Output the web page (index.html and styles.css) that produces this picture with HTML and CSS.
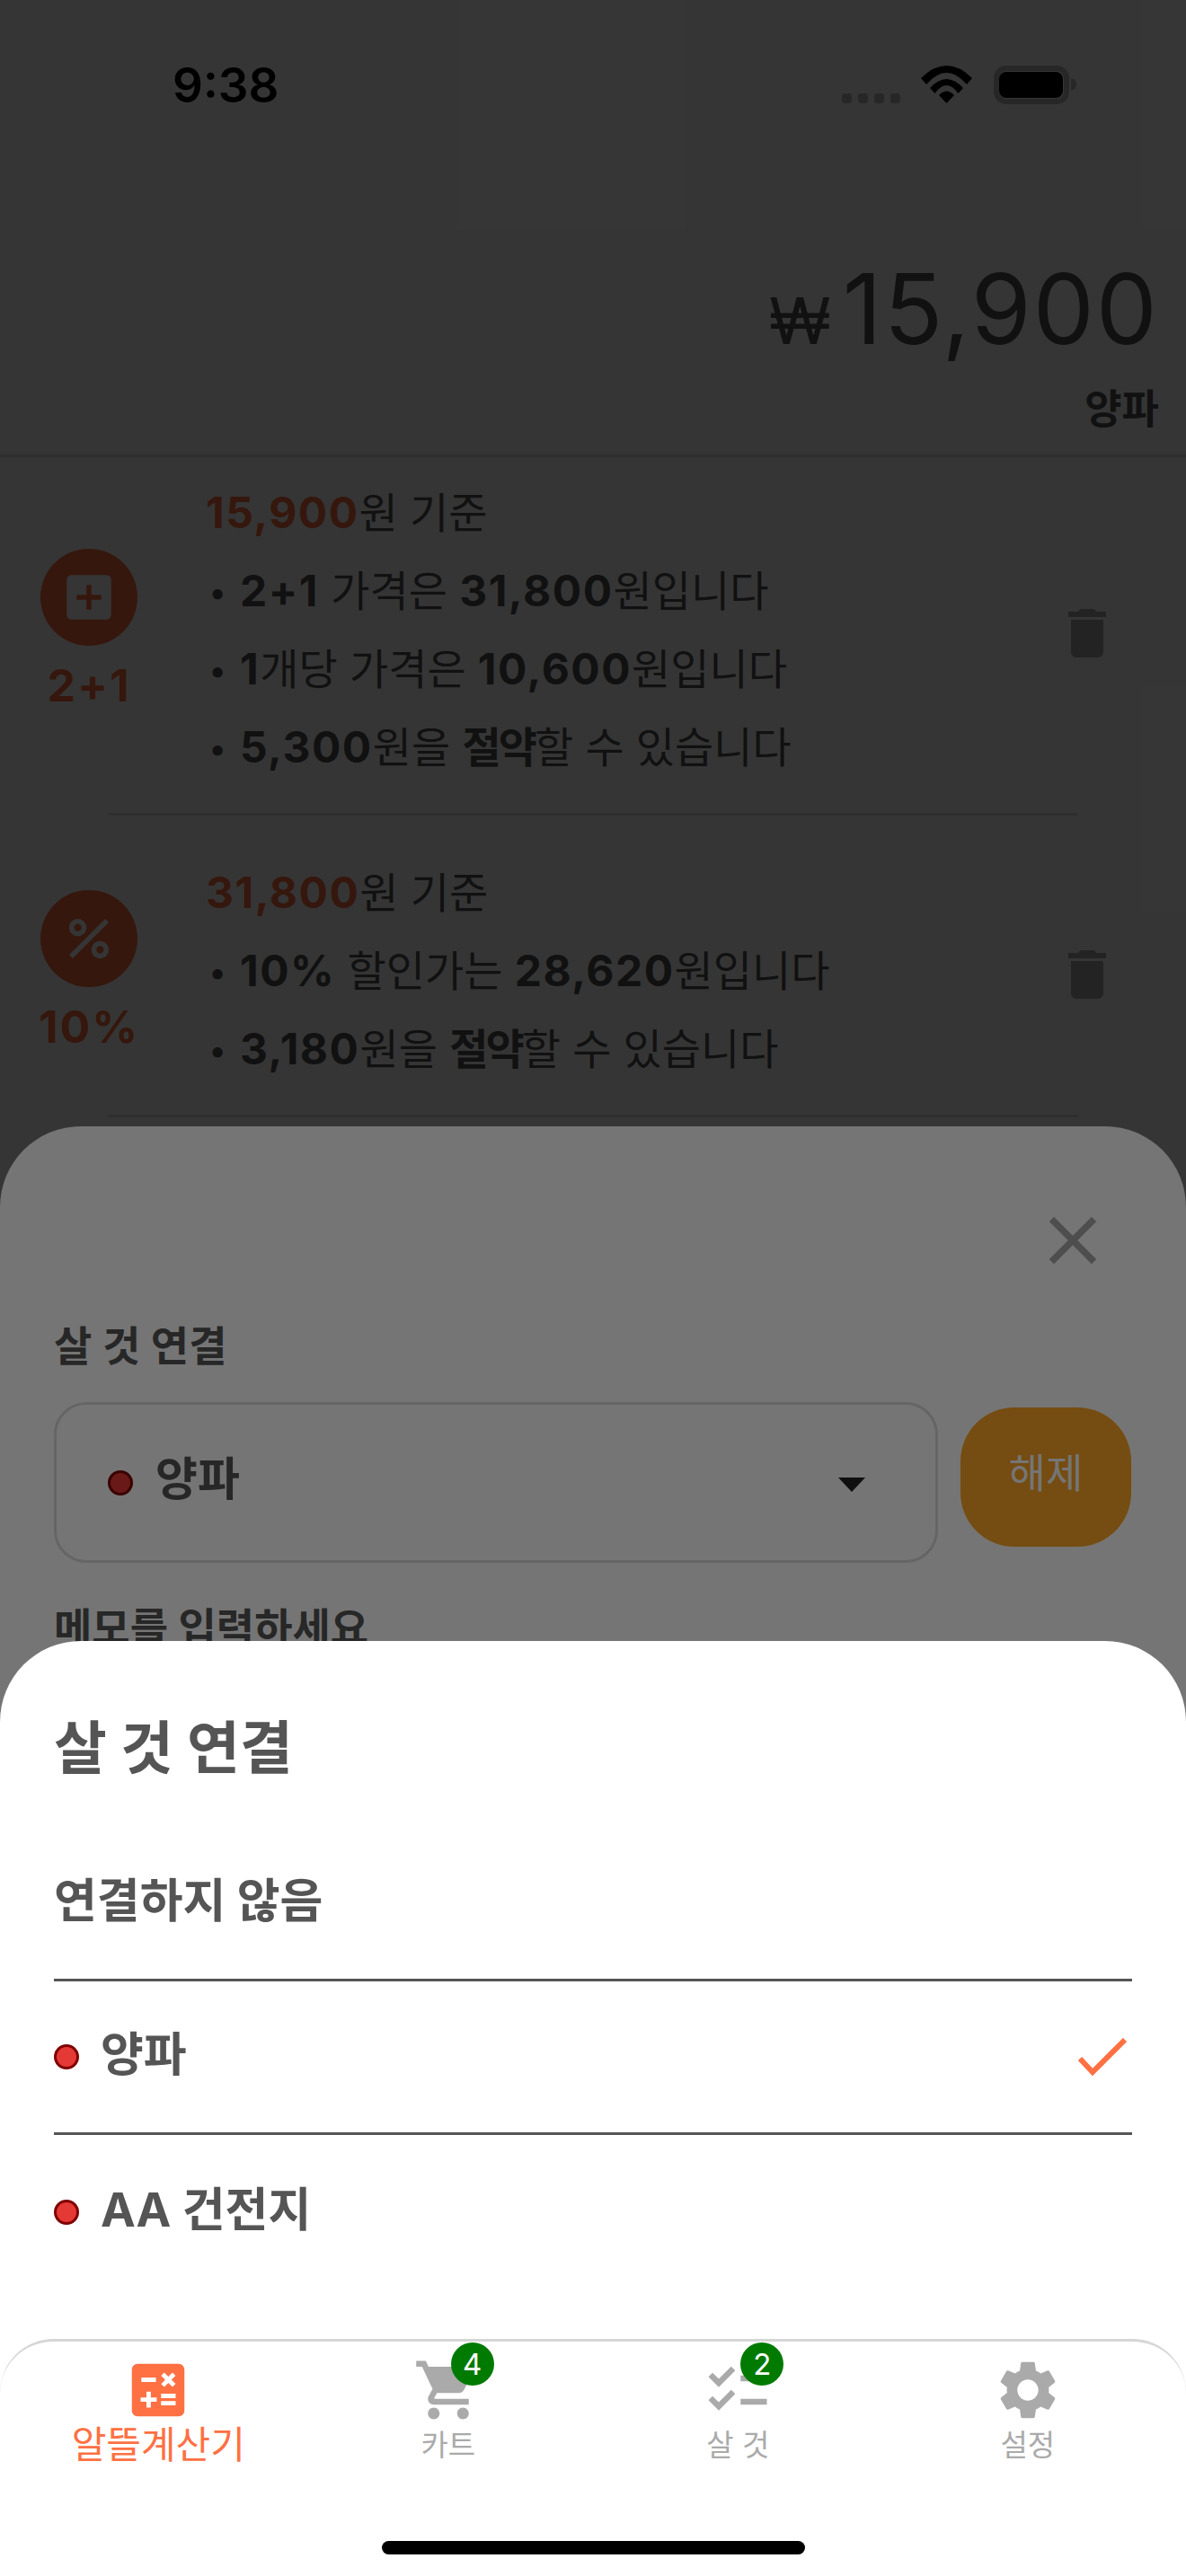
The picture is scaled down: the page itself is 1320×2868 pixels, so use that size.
FILE: index.html
```html
<!DOCTYPE html>
<html lang="ko">
<head>
    <meta charset="UTF-8">
    <meta name="viewport" content="width=device-width, initial-scale=1.0">
    <title>알뜰계산기</title>
    <link rel="stylesheet" href="styles.css">
</head>
<body>
<div class="screen">

    <div class="status-bar">
        <span class="time">9:38</span>
        <svg class="status-icons" width="261" height="43" viewBox="0 0 261 43">
            <rect x="0" y="31" width="11" height="11" rx="3" fill="#bbb"/>
            <rect x="18" y="31" width="11" height="11" rx="3" fill="#bbb"/>
            <rect x="36" y="31" width="11" height="11" rx="3" fill="#bbb"/>
            <rect x="54" y="31" width="11" height="11" rx="3" fill="#bbb"/>
            <path d="M88 14Q116.500 -14 145 14L139 21Q116.500 -5 94 21Z"/>
            <path d="M98 25Q116.500 5 135 25L129.500 31Q116.500 13 103.500 31Z"/>
            <path d="M108 33Q116.500 24 125 33L116.500 42Z"/>
            <rect x="172" y="3" width="78" height="37" rx="11" fill="none" stroke="#bbb" stroke-width="6"/>
            <rect x="175" y="7" width="71" height="29" rx="8"/>
            <path d="M255 14c4 1 6 4 6 7s-2 6-6 7z" fill="#bbb"/>
        </svg>
    </div>

    <header class="price-header">
        <div class="price"><span class="won">₩</span>15,900</div>
        <div class="price-name">양파</div>
    </header>

    <div class="deal-list">
        <div class="deal deal-first">
            <div class="deal-badge">
                <div class="deal-circle">
                    <svg width="66" height="66" viewBox="0 0 24 24" fill="#fff"><path d="M19 3H5c-1.110 0-2 .9-2 2v14c0 1.100.89 2 2 2h14c1.100 0 2-.9 2-2V5c0-1.100-.9-2-2-2zm-2 10h-4v4h-2v-4H7v-2h4V7h2v4h4v2z"/></svg>
                </div>
                <div class="deal-label">2+1</div>
            </div>
            <div class="deal-text">
                <div class="deal-line"><b class="accent">15,900</b>원 기준</div>
                <div class="deal-line"><span class="bullet">•</span><b>2+1</b> 가격은 <b>31,800</b>원입니다</div>
                <div class="deal-line"><span class="bullet">•</span><b>1</b>개당 가격은 <b>10,600</b>원입니다</div>
                <div class="deal-line"><span class="bullet">•</span><b>5,300</b>원을 <b class="word">절약</b>할 수 있습니다</div>
            </div>
            <svg class="trash" width="72" height="72" viewBox="0 0 24 24"><path d="M6 19c0 1.100.9 2 2 2h8c1.100 0 2-.9 2-2V7H6v12zM19 4h-3.500l-1-1h-5l-1 1H5v2h14V4z"/></svg>
        </div>
        <div class="deal">
            <div class="deal-badge">
                <div class="deal-circle">
                    <svg width="66" height="66" viewBox="0 0 24 24" fill="#fff"><path d="M7.500 11C9.430 11 11 9.430 11 7.500S9.430 4 7.500 4 4 5.570 4 7.500 5.570 11 7.500 11zm0-5C8.330 6 9 6.670 9 7.500S8.330 9 7.500 9 6 8.330 6 7.500 6.670 6 7.500 6zM4.003 18.589L18.589 4.003l1.414 1.414L5.418 20.003zM16.500 13c-1.930 0-3.500 1.570-3.500 3.500s1.570 3.500 3.500 3.500 3.500-1.570 3.500-3.500-1.570-3.500-3.500-3.500zm0 5c-.83 0-1.500-.67-1.500-1.500s.67-1.500 1.500-1.500 1.500.67 1.500 1.500-.67 1.500-1.500 1.500z"/></svg>
                </div>
                <div class="deal-label">10%</div>
            </div>
            <div class="deal-text">
                <div class="deal-line"><b class="accent">31,800</b>원 기준</div>
                <div class="deal-line"><span class="bullet">•</span><b>10%</b> 할인가는 <b>28,620</b>원입니다</div>
                <div class="deal-line"><span class="bullet">•</span><b>3,180</b>원을 <b class="word">절약</b>할 수 있습니다</div>
            </div>
            <svg class="trash" width="72" height="72" viewBox="0 0 24 24"><path d="M6 19c0 1.100.9 2 2 2h8c1.100 0 2-.9 2-2V7H6v12zM19 4h-3.500l-1-1h-5l-1 1H5v2h14V4z"/></svg>
        </div>
    </div>

    <div class="scrim"></div>

    <div class="sheet memo-sheet">
        <div class="sheet-close">
            <svg width="90" height="90" viewBox="0 0 24 24" fill="#aaa"><path d="M19 6.410L17.590 5 12 10.590 6.410 5 5 6.410 10.590 12 5 17.590 6.410 19 12 13.410 17.590 19 19 17.590 13.410 12z"/></svg>
        </div>
        <div class="field-label">살 것 연결</div>
        <div class="link-row">
            <div class="link-select">
                <span class="dot"></span>
                <span class="link-name">양파</span>
                <svg class="link-arrow" width="30" height="16" viewBox="0 0 30 16"><path d="M0 0H30L15 16Z"/></svg>
            </div>
            <div class="unlink-btn">해제</div>
        </div>
        <div class="field-label memo-label">메모를 입력하세요</div>
    </div>

    <div class="scrim"></div>

    <div class="sheet picker-sheet">
        <div class="picker">
            <div class="picker-title">살 것 연결</div>
            <div class="option">연결하지 않음</div>
            <div class="option">
                <span class="dot"></span>
                <span>양파</span>
                <svg class="option-check" width="54" height="42" viewBox="0 0 54 42"><path d="M2 23L16 38L52 2" fill="none" stroke="#ff7043" stroke-width="6"/></svg>
            </div>
            <div class="option option-last">
                <span class="dot"></span>
                <span>AA 건전지</span>
            </div>
        </div>

        <nav class="tabbar">
            <div class="tab tab-active">
                <div class="tab-icon">
                    <svg width="78" height="78" viewBox="0 0 24 24"><path d="M19 3H5c-1.100 0-2 .9-2 2v14c0 1.100.9 2 2 2h14c1.100 0 2-.9 2-2V5c0-1.100-.9-2-2-2zm-5.970 4.060L14.090 6l1.410 1.410L16.910 6l1.060 1.060-1.410 1.410 1.410 1.410-1.060 1.060-1.410-1.400-1.410 1.410-1.060-1.060 1.410-1.410-1.410-1.420zm-6.780.66h5v1.500h-5v-1.500zM11.500 16h-2v2H8v-2H6v-1.500h2v-2h1.500v2h2V16zm6.500 1.250h-5v-1.500h5v1.500zm0-2.500h-5v-1.500h5v1.500z"/></svg>
                </div>
                <span>알뜰계산기</span>
            </div>
            <div class="tab">
                <div class="tab-icon">
                    <svg width="78" height="78" viewBox="0 0 24 24"><path d="M7 18c-1.100 0-1.990.9-1.990 2S5.900 22 7 22s2-.9 2-2-.9-2-2-2zM1 2v2h2l3.600 7.590-1.350 2.450c-.16.28-.25.61-.25.96 0 1.100.9 2 2 2h12v-2H7.420c-.14 0-.25-.11-.25-.25l.03-.12.9-1.630h7.450c.75 0 1.410-.41 1.750-1.030l3.580-6.470c.08-.14.12-.31.12-.48 0-.55-.45-1-1-1H5.210l-.94-2H1zm16 16c-1.100 0-1.990.9-1.990 2s.89 2 1.990 2 2-.9 2-2-.9-2-2-2z"/></svg>
                    <span class="tab-count">4</span>
                </div>
                <span>카트</span>
            </div>
            <div class="tab">
                <div class="tab-icon">
                    <svg width="78" height="78" viewBox="0 0 24 24"><path d="M22 7h-9v2h9V7zM22 15h-9v2h9v-2zM5.540 11L2 7.460l1.410-1.410 2.120 2.120 4.240-4.240 1.410 1.410L5.540 11zM5.540 19L2 15.460l1.410-1.410 2.120 2.120 4.240-4.240 1.410 1.410L5.540 19z"/></svg>
                    <span class="tab-count">2</span>
                </div>
                <span>살 것</span>
            </div>
            <div class="tab">
                <div class="tab-icon">
                    <svg width="78" height="78" viewBox="0 0 24 24"><path d="M19.140 12.940c.04-.3.06-.61.06-.94 0-.32-.02-.64-.07-.94l2.030-1.580c.18-.14.23-.41.12-.61l-1.920-3.320c-.12-.22-.37-.29-.59-.22l-2.390.96c-.5-.38-1.030-.7-1.620-.94l-.36-2.540c-.04-.24-.24-.41-.48-.41h-3.840c-.24 0-.43.17-.47.41l-.36 2.540c-.59.24-1.130.57-1.620.94l-2.390-.96c-.22-.08-.47 0-.59.22L2.740 8.870c-.12.21-.08.47.12.61l2.030 1.580c-.05.3-.09.63-.09.94s.02.64.07.94l-2.030 1.580c-.18.14-.23.41-.12.61l1.920 3.320c.12.22.37.29.59.22l2.390-.96c.5.38 1.030.7 1.620.94l.36 2.540c.05.24.24.41.48.41h3.840c.24 0 .44-.17.47-.41l.36-2.540c.59-.24 1.130-.56 1.620-.94l2.390.96c.22.08.47 0 .59-.22l1.920-3.320c.12-.22.07-.47-.12-.61l-2.010-1.580zM12 15.600c-1.980 0-3.600-1.620-3.600-3.600s1.620-3.600 3.600-3.600 3.600 1.620 3.600 3.600-1.620 3.600-3.600 3.600z"/></svg>
                </div>
                <span>설정</span>
            </div>
        </nav>
        <div class="home-indicator"></div>
    </div>

</div>
</body>
</html>
```

FILE: styles.css
```css
* {
    box-sizing: border-box;
}
body {
    margin: 0;
    background-color: #fff;
    font-family: Inter, "Noto Sans CJK KR", sans-serif;
    color: #555;
}
.screen {
    position: relative;
    width: 1320px;
    height: 2868px;
    overflow: hidden;
    background-color: #fff;
}

/* status bar */
.status-bar {
    display: flex;
    justify-content: space-between;
    align-items: flex-start;
    height: 190px;
    padding: 66px 122px 0 192px;
}
.time {
    font-size: 53px;
    line-height: 58px;
    font-weight: 600;
    color: #000;
}
.status-icons {
    margin-top: 7px;
}

/* price */
.price-header {
    height: 319px;
    border-bottom: 3px solid #ddd;
    padding: 89px 30px 0 0;
    text-align: right;
}
.price {
    font-size: 108px;
    line-height: 130px;
    letter-spacing: 2px;
}
.won {
    font-size: 72px;
    margin-right: 11px;
}
.price-name {
    font-size: 45px;
    line-height: 60px;
    font-weight: 600;
    margin-top: 4px;
}

/* deals */
.deal {
    position: relative;
    display: flex;
    align-items: center;
    padding: 42px 0 25px 36px;
}
.deal-first {
    padding-top: 18px;
}
.deal::after {
    content: "";
    position: absolute;
    left: 120px;
    right: 120px;
    bottom: 0;
    border-bottom: 3px solid #ddd;
}
.deal-badge {
    width: 126px;
    display: flex;
    flex-direction: column;
    align-items: center;
    flex-shrink: 0;
}
.deal-circle {
    width: 108px;
    height: 108px;
    border-radius: 50%;
    background-color: #ff7043;
    display: flex;
    align-items: center;
    justify-content: center;
}
.deal-label {
    font-size: 50px;
    line-height: 72px;
    font-weight: 700;
    letter-spacing: 2px;
    white-space: nowrap;
    color: #ff7043;
    margin-top: 8px;
}
.deal-text {
    flex: 1;
    margin-left: 67px;
    padding-bottom: 8px;
}
.deal-line {
    font-size: 47px;
    line-height: 87px;
}
.deal-line b {
    font-size: 48px;
    font-weight: 700;
    letter-spacing: 1.5px;
}
.deal-line .word {
    font-size: 47px;
    letter-spacing: -3px;
}
.bullet {
    display: inline-block;
    width: 38px;
    padding-left: 3px;
    font-size: 36px;
    vertical-align: 3px;
    line-height: 1;
}
.accent {
    color: #ff7043;
}
.trash {
    fill: #aaa;
    margin-right: 74px;
}

/* sheets */
.scrim {
    position: absolute;
    inset: 0;
    background-color: rgba(0, 0, 0, 0.54);
}
.sheet {
    position: absolute;
    left: 0;
    right: 0;
    bottom: 0;
    background-color: #fff;
    border-radius: 90px 90px 0 0;
}
.memo-sheet {
    top: 1254px;
    padding: 82px 60px 0;
}
.sheet-close {
    display: flex;
    justify-content: flex-end;
    margin-right: 21px;
    height: 90px;
}
.field-label {
    font-size: 46px;
    line-height: 72px;
    font-weight: 600;
    margin-top: 36px;
}
.link-row {
    display: flex;
    align-items: flex-start;
    gap: 25px;
    margin-top: 27px;
}
.link-select {
    width: 984px;
    height: 179px;
    border: 3px solid #ddd;
    border-radius: 36px;
    display: flex;
    align-items: center;
    padding: 0 78px 0 57px;
}
.link-name {
    font-size: 51px;
    font-weight: 600;
    margin-left: 25px;
    margin-bottom: 16px;
}
.link-arrow {
    fill: #222;
    margin-left: auto;
    margin-top: 4px;
}
.unlink-btn {
    width: 190px;
    height: 155px;
    margin-top: 6px;
    border-radius: 60px;
    background-color: #ffa726;
    color: #fff;
    font-size: 45px;
    line-height: 148px;
    text-align: center;
}
.memo-label {
    margin-top: 36px;
}
.dot {
    width: 28px;
    height: 28px;
    border-radius: 50%;
    background-color: #e53935;
    border: 3px solid #7f0000;
    flex-shrink: 0;
}

/* picker */
.picker-sheet {
    top: 1827px;
}
.picker {
    padding: 74px 60px 0;
}
.picker-title {
    font-size: 64px;
    line-height: 90px;
    font-weight: 700;
    margin-bottom: 44px;
}
.option {
    display: flex;
    align-items: center;
    gap: 24px;
    height: 171px;
    padding-bottom: 13px;
    border-bottom: 3px solid #555;
    font-size: 52px;
    font-weight: 700;
}
.option .dot {
    margin-top: 13px;
}
.option-last {
    border-bottom: none;
}
.option-check {
    margin-left: auto;
    margin-right: 6px;
    margin-top: 12px;
}

/* tab bar */
.tabbar {
    display: flex;
    height: 145px;
    margin-top: 56px;
    padding: 15px 15px 0;
    border-top: 3px solid #d6d6d6;
    border-radius: 60px 60px 0 0;
    box-sizing: content-box;
}
.tab {
    flex: 1;
    display: flex;
    flex-direction: column;
    align-items: center;
    font-size: 33px;
    line-height: 44px;
    color: #aaa;
}
.tab-icon {
    position: relative;
    width: 78px;
    height: 78px;
    fill: #aaa;
}
.tab-icon svg {
    display: block;
}
.tab-active {
    font-size: 42px;
    color: #ff7043;
}
.tab-active .tab-icon {
    fill: #ff7043;
}
.tab-count {
    position: absolute;
    top: -14px;
    left: 42px;
    width: 48px;
    height: 48px;
    border-radius: 50%;
    background-color: #007a00;
    color: #fff;
    font-size: 33px;
    line-height: 48px;
    text-align: center;
}
.home-indicator {
    width: 471px;
    height: 15px;
    margin: 62px auto 0;
    border-radius: 8px;
    background-color: #000;
}
```
